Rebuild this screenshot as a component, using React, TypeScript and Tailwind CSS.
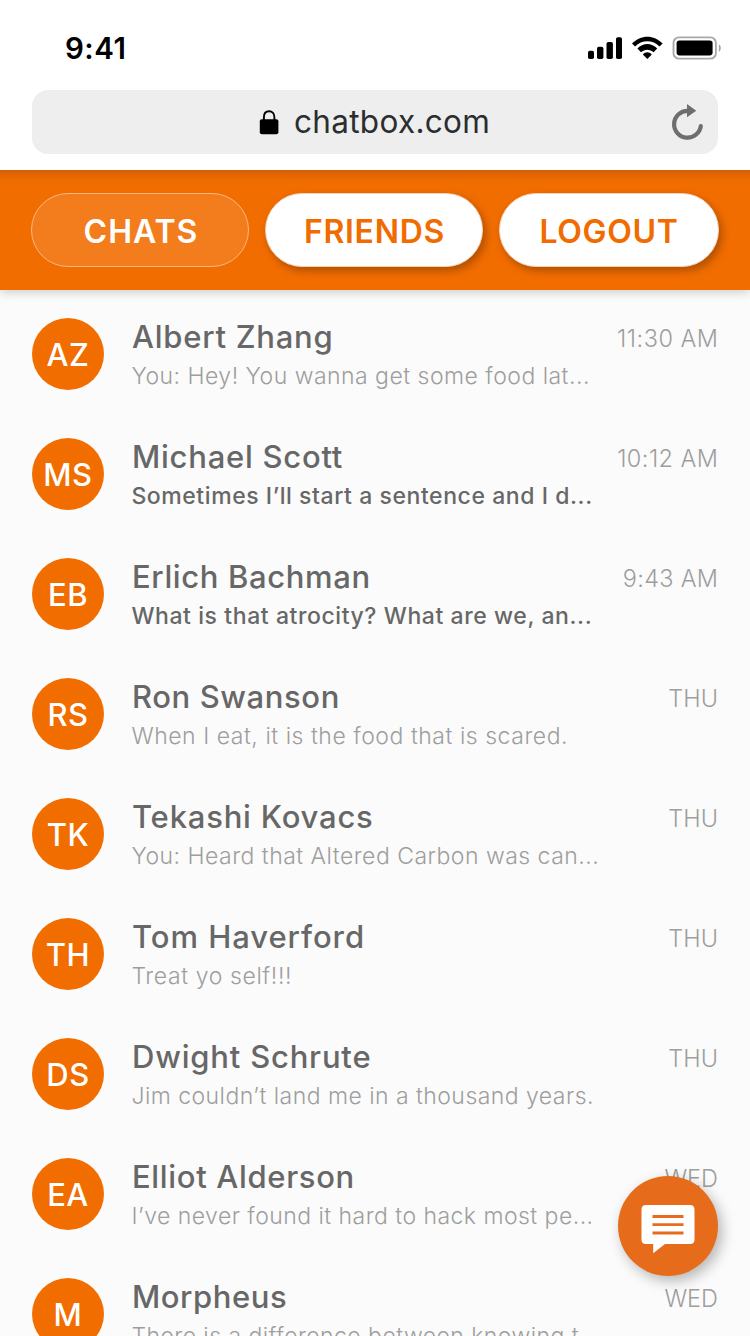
type Chat = {
  initials: string;
  name: string;
  nameTracking: string;
  message: string;
  messageTracking: string;
  time: string;
  timeTracking?: string;
  unread?: boolean;
};

const chats: Chat[] = [
  { initials: 'AZ', name: 'Albert Zhang', nameTracking: 'tracking-[0.75px]', message: 'You: Hey! You wanna get some food lat...', messageTracking: 'tracking-[0.48px]', time: '11:30 AM', timeTracking: 'tracking-[0.5px] -mr-[0.5px]' },
  { initials: 'MS', name: 'Michael Scott', nameTracking: 'tracking-[0.75px]', message: 'Sometimes I’ll start a sentence and I d...', messageTracking: 'tracking-[0.57px]', time: '10:12 AM', timeTracking: 'tracking-[0.45px] -mr-[0.45px]', unread: true },
  { initials: 'EB', name: 'Erlich Bachman', nameTracking: 'tracking-[0.63px]', message: 'What is that atrocity? What are we, an...', messageTracking: 'tracking-[0.58px]', time: '9:43 AM', timeTracking: 'tracking-[0.3px] -mr-[0.3px]', unread: true },
  { initials: 'RS', name: 'Ron Swanson', nameTracking: 'tracking-[0.6px]', message: 'When I eat, it is the food that is scared.', messageTracking: 'tracking-[0.53px]', time: 'THU' },
  { initials: 'TK', name: 'Tekashi Kovacs', nameTracking: 'tracking-[0.8px]', message: 'You: Heard that Altered Carbon was can...', messageTracking: 'tracking-[0.48px]', time: 'THU' },
  { initials: 'TH', name: 'Tom Haverford', nameTracking: 'tracking-[0.95px]', message: 'Treat yo self!!!', messageTracking: 'tracking-[0.6px]', time: 'THU' },
  { initials: 'DS', name: 'Dwight Schrute', nameTracking: 'tracking-[0.8px]', message: 'Jim couldn’t land me in a thousand years.', messageTracking: 'tracking-[0.46px]', time: 'THU' },
  { initials: 'EA', name: 'Elliot Alderson', nameTracking: 'tracking-[0.67px]', message: 'I’ve never found it hard to hack most pe...', messageTracking: 'tracking-[0.46px]', time: 'WED' },
  { initials: 'M', name: 'Morpheus', nameTracking: 'tracking-[0.55px]', message: 'There is a difference between knowing t...', messageTracking: 'tracking-[0.46px]', time: 'WED' },
];

function StatusBar() {
  return (
    <div className="flex h-[90px] items-start justify-between pl-[65px] pr-[28px] pt-[28px]">
      <span className="text-[29.5px] font-semibold leading-[40px] tracking-[0.5px] text-black">9:41</span>
      <svg className="mt-2 h-6 w-[136px]" viewBox="586 36 136 24" fill="none">
        <g fill="#000">
          <rect x="588" y="50.7" width="6" height="8.3" rx="1.8" />
          <rect x="597" y="46.8" width="6.4" height="12.2" rx="1.8" />
          <rect x="606.5" y="42" width="6.4" height="17" rx="1.8" />
          <rect x="616" y="37.2" width="6" height="21.8" rx="1.8" />
          <path d="M632 43.6C640.4 34.3 654.2 34.3 662.6 43.6L659.5 46.6C653 39.6 641.6 39.6 635.1 46.6Z" />
          <path d="M637.4 48.6C643 42.4 651.6 42.4 657.2 48.6L653.6 52.2C650 48.8 644.6 48.8 641 52.2Z" />
          <path d="M642.8 54.4C645.5 51.6 649.1 51.6 651.8 54.4L647.3 59Z" />
          <rect x="676.6" y="40.6" width="36" height="14.8" rx="2.8" />
        </g>
        <rect x="673.5" y="37.4" width="42.4" height="21.2" rx="5.4" stroke="#a9a9a9" strokeWidth="1.9" />
        <path d="M718.9 44.2C721.4 45.6 721.4 50.4 718.9 51.8Z" fill="#a3a3a3" />
      </svg>
    </div>
  );
}

function AddressBar() {
  return (
    <div className="mx-8 flex h-16 items-center rounded-2xl bg-[#eeeeee]">
      <svg className="ml-[227px] h-[25px] w-[20px]" viewBox="0 0 20 25" fill="none">
        <rect x="0.8" y="9.3" width="18.6" height="15" rx="2" fill="#000" />
        <path d="M4.9 11V7.2C4.9 3.5 7 1.2 10.1 1.2S15.4 3.5 15.4 7.2V11" stroke="#000" strokeWidth="1.9" />
      </svg>
      <span className="ml-[15px] w-[200px] whitespace-nowrap text-[31.5px] leading-10 tracking-[0.3px] text-[#2b2d2f]">chatbox.com</span>
      <svg className="ml-auto mr-[14px] h-[38px] w-[34px]" viewBox="670 103 34 38" fill="none">
        <path d="M687.6 110.9A13.4 13.4 0 1 0 700.8 126" stroke="#6e6e6e" strokeWidth="4.2" strokeLinecap="round" />
        <path d="M687 104L696.3 110.7L687 117.3Z" fill="#6e6e6e" />
      </svg>
    </div>
  );
}

function Nav() {
  const raised =
    'h-[74px] rounded-full border border-[#f3d2b8] bg-white text-[#f06c00] shadow-[3px_4px_8px_rgba(0,0,0,0.28)]';
  return (
    <nav className="relative flex h-[120px] shrink-0 items-start gap-4 bg-[#f26d00] pl-[31px] pt-[23px] text-[32px] font-semibold shadow-[0_2px_10px_rgba(0,0,0,0.2)]">
      <div className="pointer-events-none absolute inset-x-0 top-0 h-3 bg-linear-to-b from-black/12 to-transparent" />
      <button className="h-[74px] w-[218px] rounded-full border border-[#f8b785] bg-[#f37c1d] pl-[2px] pt-[3px] tracking-[1px] text-white">CHATS</button>
      <button className={`w-[218px] pl-px pt-[3px] tracking-[0.7px] ${raised}`}>FRIENDS</button>
      <button className={`w-[220px] pt-[3px] tracking-[0.7px] ${raised}`}>LOGOUT</button>
    </nav>
  );
}

function ChatRow({ chat }: { chat: Chat }) {
  return (
    <li className="flex h-[120px] shrink-0 items-start">
      <div className="flex size-[72px] shrink-0 items-center justify-center rounded-full bg-[#f26d00] pt-[3px] text-[31px] font-medium tracking-[0.5px] text-white">
        {chat.initials}
      </div>
      <div className="ml-7 min-w-0 flex-1 whitespace-nowrap">
        <div className="flex h-[38px] justify-between">
          <h2 className={`text-[31px] font-medium leading-[38px] text-[#676767] ${chat.nameTracking}`}>{chat.name}</h2>
          <time className={`text-[23.5px] font-light leading-[41px] text-[#9e9e9e] ${chat.timeTracking ?? ''}`}>{chat.time}</time>
        </div>
        <p className={`-ml-[0.6px] text-[23px] leading-10 ${chat.messageTracking} ${chat.unread ? 'font-medium text-[#676767]' : 'font-light text-[#9e9e9e]'}`}>
          {chat.message}
        </p>
      </div>
    </li>
  );
}

export default function App() {
  return (
    <div className="relative flex h-[1336px] w-[750px] flex-col overflow-hidden bg-[#fbfbfb] font-['Inter',sans-serif]">
      <header className="relative z-10 h-[170px] shrink-0 bg-white">
        <StatusBar />
        <AddressBar />
      </header>
      <Nav />
      <ul className="flex flex-col px-8 pt-7">
        {chats.map((chat) => (
          <ChatRow key={chat.name} chat={chat} />
        ))}
      </ul>
      <button aria-label="New message" className="absolute bottom-[60px] right-8 flex size-[100px] items-center justify-center rounded-full bg-[#e66c1c] shadow-[4px_5px_14px_rgba(0,0,0,0.28)]">
        <svg className="size-[100px]" viewBox="0 0 100 100">
          <path d="M28 29H72Q76.5 29 76.5 33.5V63.5Q76.5 68 72 68H47L35.2 77.2V68H28Q23.5 68 23.5 63.5V33.5Q23.5 29 28 29Z" fill="#fff" />
          <path d="M34.5 40.5H65.5M34.5 48.7H65.5M34.5 57H65.5" stroke="#e66c1c" strokeWidth="2.8" />
        </svg>
      </button>
    </div>
  );
}
